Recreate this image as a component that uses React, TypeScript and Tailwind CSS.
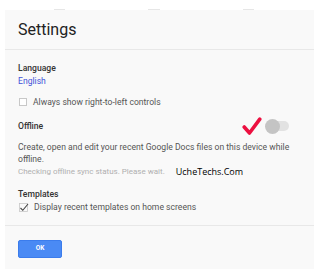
import React from "react";

export default function App() {
  return (
    <div className="w-[320px] h-[280px] bg-white relative overflow-hidden" style={{ fontFamily: "Roboto, 'Liberation Sans', sans-serif" }}>
      <div className="absolute top-[9px] left-[54px] w-[11px] h-[1px] bg-[#e6e6e6]" />
      <div className="absolute top-[9px] left-[148px] w-[12px] h-[1px] bg-[#e6e6e6]" />
      <div className="absolute top-[9px] left-[243px] w-[11px] h-[1px] bg-[#e6e6e6]" />
      <div className="ml-[5px] mt-[10px] w-[309px] h-[259px] bg-[#f9f9f9] flex flex-col">
        <div className="h-[40px] border-b border-[#e8e8e8] flex items-center pl-[13px]">
          <span className="text-[16px] text-[#222] leading-none">Settings</span>
        </div>
        <div className="pl-[13px] pr-[12px] pt-[13px] flex flex-col">
          <div className="text-[8.6px] font-medium text-[#333] leading-[11px]">Language</div>
          <div className="text-[8.6px] text-[#3f51d8] leading-[15px]">English</div>
          <div className="flex items-center mt-[7px] h-[12px]">
            <div className="w-[8px] h-[8px] border border-[#c8c8c8] bg-white ml-[1px]" />
            <span className="ml-[6px] text-[8.6px] text-[#555]">Always show right-to-left controls</span>
          </div>
          <div className="flex items-center mt-[10px] h-[16px]">
            <span className="text-[8.6px] font-medium text-[#333]">Offline</span>
            <div className="ml-auto mr-[13px] flex items-center">
              <svg width="20" height="19" viewBox="0 0 20 19">
                <path d="M2.2 10 L7.5 16 L17.8 2.2" fill="none" stroke="#ec1040" strokeWidth="3.6" strokeLinecap="round" strokeLinejoin="round" />
              </svg>
              <div className="relative ml-[3px] w-[24px] h-[15px] flex items-center">
                <div className="absolute left-[3px] right-0 h-[10px] rounded-full bg-[#e2e2e2]" />
                <div className="absolute left-0 w-[15px] h-[15px] rounded-full bg-[#c4c4c4]" />
              </div>
            </div>
          </div>
          <div className="mt-[8px] text-[8.6px] text-[#555] leading-[11.5px] w-[284px]">
            Create, open and edit your recent Google Docs files on this device while offline.
          </div>
          <div className="flex items-center h-[13px]">
            <span className="text-[8px] text-[#b0b0b0]">Checking offline sync status. Please wait.</span>
            <span className="ml-[11px] text-[9px] text-black" style={{ fontFamily: "'Open Sans', sans-serif" }}>UcheTechs.Com</span>
          </div>
          <div className="mt-[11px] text-[8.6px] font-medium text-[#333] leading-[11px]">Templates</div>
          <div className="flex items-center h-[13px] mt-[1px]">
            <svg width="10" height="10" viewBox="0 0 10 10" className="ml-[1px]">
              <rect x="0.5" y="0.5" width="8" height="8" fill="none" stroke="#c8c8c8" strokeWidth="0.8" />
              <path d="M1.5 5 L3.8 7.3 L9 1" fill="none" stroke="#444" strokeWidth="1.1" />
            </svg>
            <span className="ml-[5px] text-[8.6px] text-[#555]">Display recent templates on home screens</span>
          </div>
        </div>
        <div className="mt-auto h-[44px] border-t border-[#e8e8e8] pl-[13px] pt-[14px]">
          <div className="w-[44px] h-[18px] bg-[#4a8af4] border border-[#3b7cec] rounded-[2px] flex items-center justify-center">
            <span className="text-[6.5px] font-bold text-white">OK</span>
          </div>
        </div>
      </div>
    </div>
  );
}
